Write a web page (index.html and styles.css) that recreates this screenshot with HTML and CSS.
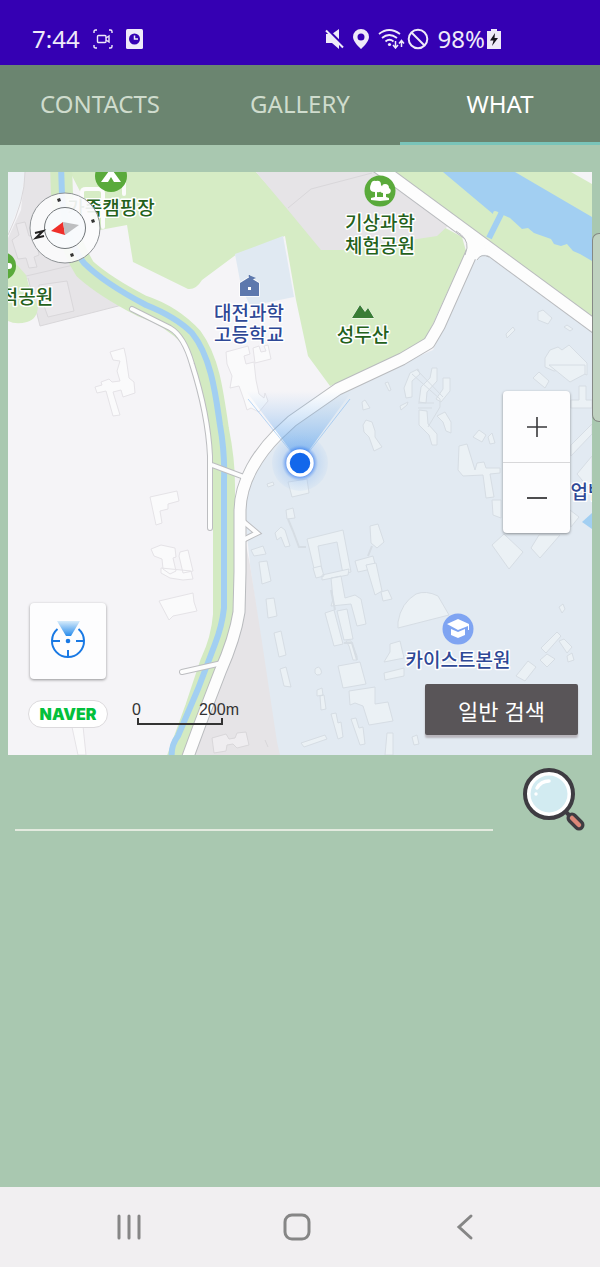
FILE: index.html
```html
<!DOCTYPE html>
<html lang="ko">
<head>
<meta charset="utf-8">
<meta name="viewport" content="width=device-width, initial-scale=1">
<title>What</title>
<link rel="stylesheet" href="styles.css">
</head>
<body>
<header class="status">
  <div class="status-group status-left">
    <span class="clock">7:44</span>
    <svg width="20" height="20" viewBox="0 0 20 20" fill="none" stroke="currentColor" stroke-width="1.4"><path d="M1 4V2.500Q1 1 2.500 1H4M16 1h1.500Q19 1 19 2.500V4M19 16v1.500Q19 19 17.500 19H16M4 19H2.500Q1 19 1 17.500V16"/><rect x="4.500" y="6.500" width="8.500" height="7" rx="1"/><path d="M13 9l3-2v6l-3-2"/></svg>
    <svg class="alarm" width="17" height="20" viewBox="0 0 17 20"><rect width="17" height="20" rx="1.500" fill="#efeaf9"/><circle cx="8.500" cy="10" r="5.500" fill="#3500b3"/><path d="M8.500 6.500V10h3.500" stroke="#efeaf9" stroke-width="1.500" fill="none"/></svg>
  </div>
  <div class="status-group status-right">
    <svg width="19" height="20" viewBox="0 0 19 20"><path d="M1 5h6l7-5v20l-7-6H1z" fill="currentColor"/><path d="M2 0l18 18" stroke="#3500b3" stroke-width="2.500"/><path d="M1 1.500l17 17" stroke="currentColor" stroke-width="2"/></svg>
    <svg width="16" height="20" viewBox="0 0 16 20"><path fill="currentColor" fill-rule="evenodd" d="M8 0a8 8 0 0 1 8 8c0 5-8 12-8 12S0 13 0 8a8 8 0 0 1 8-8zm0 4.500a3.500 3.500 0 1 0 0 7 3.500 3.500 0 0 0 0-7z"/></svg>
    <svg class="wifi" width="27" height="20" viewBox="0 0 27 20" fill="none" stroke="currentColor" stroke-width="1.800"><path d="M1 5q10-8 21 0M4 9q7-6 15 0M7.500 12.500q4-3.500 8 0"/><circle cx="11.500" cy="15.500" r="1.600" fill="currentColor" stroke="none"/><path d="M17.500 12v7m-2.500-3l2.500 3 2.500-3M23.500 18v-6m-2.500 2.500l2.500-3 2.500 3" stroke-width="1.500"/></svg>
    <svg width="22" height="22" viewBox="0 0 22 22" fill="none" stroke="currentColor" stroke-width="2"><circle cx="11" cy="11" r="9.300"/><path d="M4.500 4.500l13 13"/></svg>
    <span class="battery">98%</span>
    <svg width="14" height="20" viewBox="0 0 14 20"><path d="M0 2h4V0h6v2h4v18H0z" fill="#efeaf9"/><path d="M8 4L3 11.500h3.500L5 17l6-8H7.500z" fill="#17131f"/></svg>
  </div>
</header>

<nav class="tabs" aria-label="Sections">
  <button class="tab" type="button">CONTACTS</button>
  <button class="tab" type="button">GALLERY</button>
  <button class="tab tab-active" type="button" aria-current="page">WHAT</button>
</nav>

<main class="content">
  <section class="map" aria-label="지도">
    <svg class="map-canvas" viewBox="8 172 584 583" preserveAspectRatio="xMidYMid slice">
      <defs>
        <linearGradient id="beam" x1="0" y1="0" x2="0" y2="1"><stop offset="0" stop-color="#8bbdf0" stop-opacity="0"/><stop offset="1" stop-color="#5ba2ee" stop-opacity=".8"/></linearGradient>
        <radialGradient id="halo"><stop offset="0" stop-color="#1766ff" stop-opacity=".9"/><stop offset=".48" stop-color="#2b74f0" stop-opacity=".7"/><stop offset=".65" stop-color="#8bb9f2" stop-opacity=".3"/><stop offset="1" stop-color="#a4c9f3" stop-opacity=".12"/></radialGradient>
      </defs>
      <rect class="land" x="8" y="172" width="584" height="583"/>
      <!-- built-up blocks -->
      <path class="pale" d="M8 172h17l-4 28-13 33z"/>
      <path class="block" d="M25 172h30l8 40 12 53 15 18 40 20-90 23-12-46-6-3-14-25v-14l13-28z"/>
      <path class="block-line" d="M25 172q0 28-17 63M22 277l60-14M28 278l12 48 90-23"/>
      <path class="lot" d="M12 240l7-5-3-11 9-2 4 14 6-1 4 20-5 2 3 10-8 1-3-10-8 1zM39 285l28-4 7 30-26 6-5-14-5-1z"/>
      <!-- parks -->
      <path class="park" d="M8 257q10 8 18 18l5 18 7 12q0 14-11 17-11 3-19-1z"/>
      <path class="park" d="M70 172h186l32 36 33 40 24 2 75-14 20-11 22 12 4 14-40 88-18 16-78 31-22-30-12-56-11-64-48 18-35 26q-6 10-14 9l-55-27-6-37-27 5z"/>
      <path class="block" d="M256 172h119l75 52-13 12-92 14h-24l-33-40z"/>
      <path class="block-line" d="M288 208l23-19 61-16"/>
      <path class="school" d="M235 254l48-18 11 61-44 9-9-20z"/>
      <path class="park" d="M376 172h216v150L395 180z"/>
      <path class="land" d="M571 172h21v12z"/>
      <path class="lake" d="M443 172h72l77 45v44l-12-7-7-3-6-7-6 2-7-2-3-5-17-6-6-5-6 1-12-11-9-4q-8-6-8 0z"/>
      <path class="inlet" d="M502 212l-13 26"/>
      <!-- campus and the block beside it -->
      <path class="campus" d="M477 256l9-6 106 76v429H277l-27-190-5-50 3-30 15-35 35-35 42-24 93-41z"/>
      <path class="block" d="M246 545l4 20 12 77 15 100 3 13h-95l35-80 25-70z"/>
      <!-- stream with its green banks -->
      <path class="bank" d="M61 165l1 30q2 40 23 74 20 18 57 37 30 10 50 32c16 22 20 50 26 92q6 30 6 55v130q-2 25-13 48l-15 45-20 55"/>
      <path class="stream" d="M61 165l1 30q3 44 22 68 20 20 62 42 30 12 46 28c20 25 24 65 28 92q5 28 4 55v128q-2 18-9 36l-17 45-20 47q-8 10-6 25"/>
      <!-- roads -->
      <path class="campus-ring" d="M82 205v-13q0-3 4-3h13q4 0 4 4v34M124 172v22"/>
      <path class="casing" d="M132 309l38 19q14 8 22 36 16 50 18 92v72M212 465l32 12M182 672l40-9M244 522l13 11-14 7"/>
      <path class="casing-main" d="M186 762l14-38 20-52q15-34 19-60l1-40v-60q0-22 12-44 10-18 25-33l15-14 46-32 64-30 27-16 10-17 33-74"/>
      <path class="casing-avenue" d="M370 161l238 175"/>
      <path class="lanes" d="M132 309l38 19q14 8 22 36 16 50 18 92v72M212 465l32 12M182 672l40-9M244 522l13 11-14 7"/>
      <path class="main-road" d="M186 762l14-38 20-52q15-34 19-60l1-40v-60q0-22 12-44 10-18 25-33l15-14 46-32 64-30 27-16 10-17 33-74"/>
      <path class="avenue" d="M370 161l238 175"/>
      <path class="junction" d="M455 230q12 7 12 16l-1 9 11 5q4-8 12-4l-8-18z"/>
      <path class="junction-line" d="M456 231q12 7 11 17l-2 7M477 260q4-7 12-3"/>

      <!-- buildings west of the road -->
      <g class="house">
        <path d="M95 387l7-2-1-3 8-3 3 3 8-1-3-10 3-10-7-1-3-8 14-4 2 9 3 21 5 4 1 11-12 4-2-7-8 2 7 23-7 1-7-25-9 2zM150 497l27-6 2 10-11 3v5l-8 2 2 12-6 2zM151 549l10-4 14 3 1 9-3 1 3 13-6 3-7-5-1-10-8-3zM180 552l8-2 5 21-10 2-4-17zM161 568l30 3 2 8-10 1-13-2-9-5zM159 601l34-8 1 9 3 9-24 5-4 4zM72 727l11-1 3 29h-8z"/>
        <path d="M226 352l22-6 2 8-6 2 2 8 8-2 2 18 3 14 5 4 1-5 3 8-9 11-8-4-4 2-3-10-5-14-9 2 2-12-5-12zM253 348l6-2 2 6 5-1-2-5 4-1 3 14-16 4z"/>
      </g>
      <g class="dim-house"><path d="M212 738l14-4 3 5 6-1 2-5 9-1 3 13-12 3-4-4-6 1-1 6-12 2zM265 740l3 7"/></g>
      <!-- campus buildings -->
      <g class="hall">
        <path d="M538 312l5-2 9 8-4 6-10-4zM564 327l3-2 6 4-3 2zM506 334l7-7 2 3-8 8zM545 358l5-8 8-3 4 3 7-5 18 18v12l-18-7-15 3-9-4zM533 378l6-6 10 9-4 7z"/>
        <path d="M404 388l6-15 8-4 2 5-8 7v16l-6 1zM419 402l2-15 9-9 2-10h5v13l-10 11-1 11zM443 378h7v13l-9 11-5-3 7-10zM419 410l8 1 1 13 9 10v11h-5l-3-10-10-10zM437 416l8-4 6 10v11l-5-2-3-9zM400 406l8-4-1 3-6 5z"/>
        <path d="M412 374l28 25v8l-12 20M417 370l26 27M418 403h16M418 408h14"/>
        <path d="M549 365l21 17 15-8v-9zM571 400h8v-14h7v14h6v8H571zM571 445l21-21v10l-21 22zM577 474l15-18v36zM473 437l6-7 7 5-4 7zM488 437l4-4 3 10-5 1zM459 446l8-2 8 26 2-7 7-1 2 6h14v5l-10 1 4 23-8 1-3-23-20 1-5-6zM492 500h9v18l-8-3zM492 545l12-11 19 18-14 17zM531 548l8-13h21l-20 23zM570 510l9 7-8 10z"/>
        <path d="M363 425l3-5 6 2 3 9v6l7 10-8 4-5-14-5-5zM362 402l3-2 5 8-7 2zM385 383l3-1 3 8-2 1zM267 484l6-2 1 3-6 2zM288 482l19-3 2 14-17 4zM286 510l7-2 2 10-8 1z"/>
        <path d="M275 533l6-6 4 3 5 16-5 1-4-10-4 3zM251 550l12-4 3 8-12 2zM259 562l8-1 4 20-9 3zM370 526l8-2 6 18-7 6-6-5zM355 561l18-5 3 12-18 4zM307 539l36-9 8 42-8 2-6-32-19 4 5 30-7 1z"/>
        <path d="M313 568l8-2 3 10-8 2zM322 575l27-6-1 6-26 5zM331 578l10-2 4 22 10-3 6 4 5 25-9 2-6-22-20 2 2-7zM366 565l10-2 6 28-7 4zM381 592l7-2 4 9-9 2zM266 599l8-1 3 18-9 2zM325 613l9-3 9 34-9 2zM337 611l10-2 6 30-9 1z"/>
        <path d="M274 633l7-2 5 24-7 2zM280 669l6-2 5 20-7-1zM315 669q4-4 6 1t-4 5q-3-1-2-6zM346 641h5l6 15v4h-4l-4-14z"/>
        <path d="M338 666l22-4 6 22-23 4zM349 691l26-4v17l13-2 5 19-24 4-6-19-8-3-5 2zM317 690l5-2 1 7-6 1zM320 696l4-1 2 14-5 1zM331 714l5-1 2 10 3-1 2 15-5 2zM351 719l5-1 3 10 4-1 2 17-5 1zM301 743l24-8 2 4-23 8zM387 733h6v22h-8zM398 622q3-19 18-28 10-4 22 2l11 19-51 13zM400 641l-10 3v8l-6 10 20-4zM384 673l20-5v8l-19 4zM541 648l16-16 4 4-15 17zM559 641l5-2 8 8-5 6zM540 660l7-6 8 5-8 8zM567 656l5-3 2 7-6 2zM516 676l12-15 8 6-11 14zM559 607l4-3 2 5-3 4zM412 737l5-2 2 9-5 1z"/>
      </g>
      <path class="walk" d="M288 519l5 12 6 16h7M372 546l-4 10M331 590l4 20M344 643h8l5 17"/>
      <path class="lake" d="M582 522l10-9v16z"/>

      <!-- place icons -->
      <g><circle cx="111" cy="176" r="16" fill="#5aaa3b"/><path d="M101 182l8-11-2-2 2-1 2 2 2-2 2 1-2 2 8 11h-7l-3-5-3 5z" fill="#fff"/></g>
      <g><circle cx="2" cy="266" r="14" fill="#5aaa3b"/><circle cx="9" cy="266" r="3" fill="#fff"/></g>
      <g><circle cx="380" cy="191" r="15.500" fill="#5aaa3b"/><path d="M371 184q1-4 5-3 5-1 5 4 3 3 0 6-2 2-4 1v5h6v-4q-3 0-3-3 0-2 2-3 0-3 3-3 4 0 4 4 3 2 1 5-1 1-4 1v3l3 1v2l-9 1-9-1v-2l4-1v-5q-5 0-5-4 0-2 1-4z" fill="#fff"/></g>
      <g><path d="M240 296v-13l8-5h3l8 5v13z" fill="#5d78ad" stroke="#fff" stroke-width="1.500" paint-order="stroke"/><path d="M249.500 275v6M249 276l5 2-5 2" fill="#5d78ad" stroke="#5d78ad" stroke-width="1.500"/><path d="M248 287h3v3h-3z" fill="#fff"/></g>
      <path d="M352 318l8-13 5 7 3-4 6 10z" fill="#397c35" stroke="#fff" paint-order="stroke"/>
      <g><circle cx="458" cy="629" r="15.500" fill="#7fa4f2"/><path d="M447 624l11-5 11 5v6h-1v-4l-10 4z" fill="#fff"/><path d="M451 629l7 3 7-3v6l-7 3-7-3z" fill="#fff"/></g>

      <!-- place names -->
      <g class="place place-green">
        <text x="111" y="215">가족캠핑장</text>
        <text x="27" y="304">적공원</text>
        <text x="380" y="230">기상과학</text>
        <text x="380" y="253">체험공원</text>
        <text x="363" y="342">성두산</text>
      </g>
      <g class="place place-blue">
        <text x="249" y="320">대전과학</text>
        <text x="249" y="342">고등학교</text>
        <text x="458" y="667">카이스트본원</text>
        <text x="588" y="499">업벤</text>
      </g>

      <!-- current position -->
      <path d="M246 391h106l-52 72z" fill="url(#beam)"/>
      <path d="M248 399l44 54M350 399l-42 54" stroke="#68abf0" stroke-opacity=".45" fill="none"/>
      <circle cx="300" cy="463" r="28" fill="url(#halo)"/>
      <circle cx="300" cy="463" r="12" fill="#1267eb" stroke="#fff" stroke-width="3.500"/>
    </svg>

    <button class="compass" type="button" aria-label="나침반">
      <svg viewBox="0 0 72 72"><circle cx="36" cy="36" r="35" fill="#fbfbfc" fill-opacity=".92" stroke="#8f9396"/><circle cx="36" cy="36" r="20.500" fill="#f7fafc" fill-opacity=".8" stroke="#707578"/><path d="M22 39l12-9 2 13z" fill="#ef2f2a"/><path d="M34 30l16 3-14 10z" fill="#bdbec0"/><path d="M28 7l3-1 1 3-3 1zM62 28l3-1 1 3-3 1zM41 62l3-1 1 3-3 1z" fill="#333"/><path d="M6 41l8-2-7 7 8-2" fill="none" stroke="#222" stroke-width="2"/></svg>
    </button>
    <div class="zoom">
      <button class="zoom-button" type="button" aria-label="확대"><svg width="22" height="22" viewBox="0 0 22 22"><path d="M1 11h20M11 1v20" stroke="#39393b" stroke-width="1.600"/></svg></button>
      <button class="zoom-button" type="button" aria-label="축소"><svg width="22" height="22" viewBox="0 0 22 22"><path d="M1 11h20" stroke="#39393b" stroke-width="1.800"/></svg></button>
    </div>
    <button class="locate" type="button" aria-label="현재 위치">
      <svg width="36" height="40" viewBox="0 0 36 40"><defs><linearGradient id="cone" x1="0" y1="0" x2="0" y2="1"><stop offset="0" stop-color="#d7ecfb"/><stop offset="1" stop-color="#288cec"/></linearGradient></defs><path d="M7 2h23l-9 15h-5z" fill="url(#cone)"/><path d="M7.500 10a16 16 0 1 0 21 0M2 22h8M26 22h8M18 31v7" fill="none" stroke="#1979e4" stroke-width="2"/><circle cx="18" cy="22" r="2.300" fill="#1979e4"/></svg>
    </button>
    <div class="map-legend">
      <span class="brand">NAVER</span>
      <div class="scale"><div class="scale-labels"><span>0</span><span>200m</span></div><div class="scale-bar"></div></div>
    </div>
    <button class="mode" type="button">일반 검색</button>
  </section>

  <form class="search">
    <input class="search-input" type="text" aria-label="장소 검색">
    <button class="search-button" type="button" aria-label="검색">
      <svg width="62" height="63" viewBox="0 0 62 63"><path d="M40 41l7 7" stroke="#3e3c42" stroke-width="4"/><path d="M49 50l7 7" stroke="#3e3c42" stroke-width="11" stroke-linecap="round"/><path d="M49 50l7 7" stroke="#dc8778" stroke-width="4.500" stroke-linecap="round"/><circle cx="26" cy="26" r="24" fill="#fff" stroke="#3e3c42" stroke-width="4"/><circle cx="26" cy="26" r="18.500" fill="#d2ebf1"/><path d="M14 20q4-7 12-7" fill="none" stroke="#fff" stroke-width="3.500" stroke-linecap="round"/><circle cx="13" cy="26" r="1.700" fill="#fff"/></svg>
    </button>
  </form>
  <div class="edge-handle"></div>
</main>

<footer class="system-nav">
  <button class="system-button" type="button" aria-label="최근 앱"><svg width="28" height="28" viewBox="0 0 28 28"><path d="M4 3v22M14 3v22M24 3v22"/></svg></button>
  <button class="system-button" type="button" aria-label="홈"><svg width="28" height="28" viewBox="0 0 28 28"><rect x="2" y="2" width="24" height="24" rx="7"/></svg></button>
  <button class="system-button" type="button" aria-label="뒤로"><svg width="28" height="28" viewBox="0 0 28 28"><path d="M20 3L8 14l12 11"/></svg></button>
</footer>
</body>
</html>
```

FILE: styles.css
```css
* { box-sizing: border-box; }

body {
  margin: 0;
  min-height: 100vh;
  display: flex;
  flex-direction: column;
  background: #a9c8b0;
  font-family: "Noto Sans", "Noto Sans CJK KR", sans-serif;
}

button {
  border: 0;
  padding: 0;
  margin: 0;
  background: none;
  font: inherit;
  color: inherit;
}

svg { display: block; flex: none; }

.status {
  height: 65px;
  padding: 13px 99px 0 32px;
  display: flex;
  align-items: center;
  justify-content: space-between;
  background: #3500b3;
  color: #efeaf9;
  font-size: 24px;
  line-height: 32px;
}
.status-group { display: flex; align-items: center; }
.status-left { gap: 13px; }
.status-right { gap: 9px; }
.status-right .wifi { margin-right: -7px; }
.status-right .battery { margin-right: -7px; }

.tabs {
  height: 80px;
  display: grid;
  grid-template-columns: repeat(3, 1fr);
  background: #6b8570;
}
.tab {
  padding-bottom: 3px;
  border-bottom: 3px solid transparent;
  border-top: 3px solid transparent;
  font-size: 24px;
  color: #cfdccd;
}
.tab-active { color: #fff; border-bottom-color: #79c4b9; }

.content { position: relative; flex: 1; }

.map {
  position: relative;
  margin: 27px 8px 0;
  overflow: hidden;
}
.map-canvas { width: 100%; height: auto; }

.land { fill: #f5f4f7; }
.pale { fill: #edf1f5; }
.block { fill: #e6e4e7; }
.block-line { fill: none; stroke: #d9d7da; }
.lot { fill: #eae8eb; stroke: #d9d7da; }
.park { fill: #d6ecc5; }
.school { fill: #e0e9f2; }
.campus { fill: #e2eaf2; }
.lake { fill: #a2cff2; }
.inlet { fill: none; stroke: #a2cff2; stroke-width: 6; }
.bank { fill: none; stroke: #d3eac2; stroke-width: 22; }
.stream { fill: none; stroke: #a2cff2; stroke-width: 6; }
.campus-ring { fill: none; stroke: #fbfbfb; stroke-width: 4; stroke-linecap: round; }
.casing { fill: none; stroke: #bcbdc0; stroke-width: 6; stroke-linecap: round; }
.lanes { fill: none; stroke: #fdfdfd; stroke-width: 4; stroke-linecap: round; }
.casing-main { fill: none; stroke: #b9bbbe; stroke-width: 13; stroke-linejoin: round; }
.main-road { fill: none; stroke: #fdfdfd; stroke-width: 11; stroke-linejoin: round; }
.casing-avenue { fill: none; stroke: #b9bbbe; stroke-width: 14; }
.avenue { fill: none; stroke: #fdfdfd; stroke-width: 12; }
.junction { fill: #fdfdfd; }
.junction-line { fill: none; stroke: #b9bbbe; }
.house { fill: #fafafb; stroke: #e5e3e7; stroke-width: 1; }
.dim-house { fill: #efedf0; stroke: #d9d7da; }
.hall { fill: #ebf1f5; stroke: #d6dde4; stroke-width: 1; }
.hall path:nth-child(3) { fill: none; }
.walk { fill: none; stroke: #d6dde4; stroke-width: 2; }

.place {
  font-family: "Noto Sans CJK KR", sans-serif;
  font-size: 19px;
  font-weight: 500;
  text-anchor: middle;
  stroke: #fff;
  stroke-width: 3px;
  stroke-linejoin: round;
  paint-order: stroke;
}
.place-green { fill: #24611b; }
.place-blue { fill: #2e4896; }

.compass {
  position: absolute;
  left: 21px;
  top: 20px;
  width: 72px;
  height: 72px;
}

.zoom {
  position: absolute;
  right: 22px;
  top: 219px;
  width: 67px;
  border-radius: 4px;
  background: #fdfdfe;
  box-shadow: 0 1px 3px #0006;
}
.zoom-button {
  display: flex;
  align-items: center;
  justify-content: center;
  width: 100%;
  height: 71px;
}
.zoom-button + .zoom-button { border-top: 1px solid #d8d8da; }

.locate {
  position: absolute;
  left: 22px;
  bottom: 76px;
  width: 76px;
  height: 76px;
  padding-bottom: 4px;
  display: flex;
  align-items: center;
  justify-content: center;
  border-radius: 4px;
  background: #fdfdfe;
  box-shadow: 0 1px 3px #0006;
}

.map-legend {
  position: absolute;
  left: 20px;
  bottom: 27px;
  display: flex;
  align-items: flex-end;
  gap: 24px;
}
.brand {
  width: 80px;
  height: 28px;
  border: 1px solid #dcdadd;
  border-radius: 14px;
  background: #fff;
  color: #03c03c;
  font: 900 16px/26px Inter, sans-serif;
  text-align: center;
}
.scale { color: #333; font: 400 16px/16px "Liberation Sans", sans-serif; padding: 0 0 3px 5px; }
.scale-labels { display: flex; justify-content: space-between; width: 107px; margin-left: -5px; }
.scale-bar {
  width: 86px;
  height: 7px;
  border: solid #333;
  border-width: 0 2px 2px;
}

.mode {
  position: absolute;
  right: 14px;
  bottom: 20px;
  width: 153px;
  height: 51px;
  border-radius: 2px;
  background: #595558;
  color: #fff;
  font-family: "Noto Sans CJK KR", sans-serif;
  font-size: 22px;
  box-shadow: 0 3px 2px #b8b5bb;
}

.search {
  display: flex;
  gap: 30px;
  padding: 13px 15px 0;
}
.search-input {
  flex: 1;
  min-width: 0;
  height: 63px;
  padding: 0;
  border: 0;
  border-bottom: 2px solid #e3eadf;
  background: none;
  font: inherit;
  font-size: 24px;
}

.edge-handle {
  position: absolute;
  right: 0;
  top: 88px;
  width: 8px;
  height: 189px;
  border: 1px solid #858985;
  border-right: 0;
  border-radius: 7px 0 0 7px;
  background: #bfd2c0;
}

.system-nav {
  height: 80px;
  padding-right: 6px;
  display: flex;
  align-items: center;
  justify-content: center;
  gap: 128px;
  background: #f1eff1;
}
.system-button {
  width: 40px;
  height: 40px;
  display: flex;
  align-items: center;
  justify-content: center;
}
.system-button svg {
  fill: none;
  stroke: #868686;
  stroke-width: 3;
  stroke-linecap: round;
}
```
